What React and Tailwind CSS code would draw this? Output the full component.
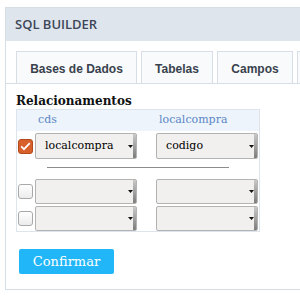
import React from "react";

const serif = { fontFamily: '"DejaVu Serif", serif' };

function Select({ text, h = "h-[25px]" }) {
  return (
    <div className={`flex shrink-0 items-stretch w-[102px] ${h} border border-[#b3b3b3] rounded-[2px] bg-[#f1f0ee] overflow-hidden`}>
      <span className="flex-1 flex items-center pl-[9px] text-[11px] text-black font-['DejaVu_Serif',serif]">{text}</span>
      <div className="w-[6px] flex items-center justify-center">
        <svg width="5" height="3" viewBox="0 0 5 3"><path d="M0 0h5L2.5 3z" fill="#111" /></svg>
      </div>
      <div className="w-[3px] bg-gradient-to-b from-[#c9c9c9] to-[#7d7d7d]" />
    </div>
  );
}

function Check({ checked }) {
  if (checked)
    return (
      <div className="w-[15px] h-[15px] shrink-0 rounded-[3px] bg-[#d8602b] border border-[#b24a1d] flex items-center justify-center">
        <svg width="11" height="9" viewBox="0 0 11 9">
          <path d="M1.2 4.3L4 7.2L9.8 1.2" stroke="#fff" strokeWidth="1.7" fill="none" />
        </svg>
      </div>
    );
  return <div className="w-[15px] h-[15px] shrink-0 rounded-[3px] bg-gradient-to-b from-white to-[#ececec] border border-[#a9a9a9]" />;
}

export default function App() {
  const tab = "shrink-0 h-[33px] -mb-px border border-[#d7dee6] bg-[#f8fafc] flex items-center justify-center pt-[2px]";
  return (
    <div className="w-[300px] h-[299px] overflow-hidden bg-white pt-[7px] pl-[5px]">
      <div className="w-[320px] h-[283px] border border-[#d5dde5]">
        <div className="h-[33px] bg-[#dee5ed] flex items-center pl-[9px] text-[13px] font-semibold text-[#3d4757] font-['Open_Sans',sans-serif]">
          SQL BUILDER
        </div>
        <div className="pt-[10px]">
          <div className="flex gap-[4px] pl-[10px] border-b border-[#d7dee6] font-['Liberation_Sans',sans-serif] font-bold text-[12px] text-[#39414d] overflow-hidden">
            <div className={`${tab} w-[121px]`}>Bases de Dados</div>
            <div className={`${tab} w-[72px]`}>Tabelas</div>
            <div className={`${tab} w-[76px]`}>Campos</div>
            <div className={`${tab} w-[60px]`} />
          </div>
          <div className="pl-[10px]">
            <div className="mt-[9px] leading-[16px] text-[12px] font-bold text-[#111]" style={serif}>Relacionamentos</div>
            <div className="w-[244px] border border-[#dde4ec]">
              <div className="h-[21px] bg-[#eef4fb] flex items-center text-[11px] text-[#5a87c5]" style={serif}>
                <span className="w-[139px] shrink-0 pl-[21px]">cds</span>
                <span className="pl-[3px]">localcompra</span>
              </div>
              <div className="mt-[2px] flex items-center h-[26px]">
                <div className="w-[139px] shrink-0 flex items-center pl-[1px] gap-[2px]">
                  <Check checked />
                  <Select text="localcompra" h="h-[26px]" />
                </div>
                <Select text="codigo" h="h-[26px]" />
              </div>
              <div className="mt-[8px] flex justify-center">
                <div className="w-[182px] h-px bg-[#8c8c8c]" />
              </div>
              <div className="mt-[11px] flex flex-col gap-[2px]">
                {[0, 1].map((i) => (
                  <div key={i} className="flex items-center h-[25px]">
                    <div className="w-[139px] shrink-0 flex items-center pl-[1px] gap-[2px]">
                      <Check />
                      <Select text="" />
                    </div>
                    <Select text="" />
                  </div>
                ))}
              </div>
            </div>
            <button className="mt-[17px] ml-[3px] w-[95px] h-[25px] bg-[#21b6f7] rounded-[2px] text-white text-[13px] flex items-center justify-center" style={serif}>
              Confirmar
            </button>
          </div>
        </div>
      </div>
    </div>
  );
}
